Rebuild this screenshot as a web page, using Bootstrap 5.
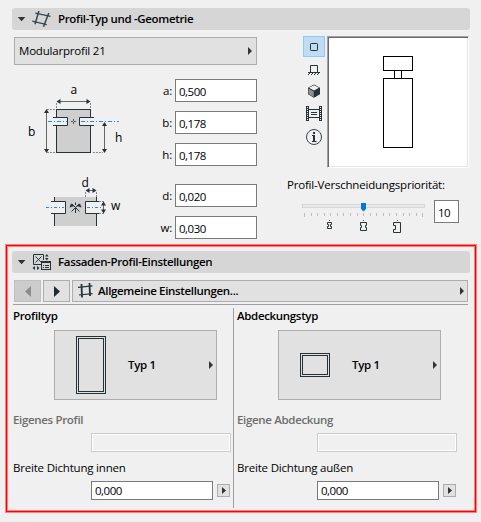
<!DOCTYPE html>
<html lang="de">
<head>
  <meta charset="UTF-8" />
  <meta name="viewport" content="width=device-width, initial-scale=1.0" />
  <title>Profil-Einstellungen</title>
  <link rel="stylesheet" href="https://cdn.jsdelivr.net/npm/bootstrap@5.3.0/dist/css/bootstrap.min.css" />
  <style>
    body {
      width: 481px;
      height: 522px;
      background: #f0f0f0;
      color: #000;
      font: 11.5px/16px "Open Sans", "Noto Sans", sans-serif;
      letter-spacing: -0.2px;
    }
    svg { display: block; flex: none; }
    svg text { font-size: 12px; fill: #000; }
    .panel-title {
      height: 22px;
      margin: 0 11px 0 12px;
      background: #d6d6d6;
      border-radius: 3px;
      font-weight: 600;
      letter-spacing: -0.33px;
    }
    .win-btn {
      background: #e1e1e1;
      border: 1px solid #adadad;
      border-radius: 0;
      padding: 0;
      color: #000;
      font-size: 11.5px;
      line-height: 16px;
      letter-spacing: inherit;
      display: flex;
      align-items: center;
    }
    .win-btn:disabled { background: #ccc; border-color: #bfbfbf; opacity: 1; }
    .heavy { font-weight: 600; letter-spacing: -0.33px; }
    .dim { color: #6d6d6d; }
    .win-field {
      height: 23px;
      padding: 1px 3px 0;
      border: 1px solid #7a7a7a;
      border-radius: 0;
      background: #fff;
      color: #000;
      font-size: 11.5px;
      line-height: 16px;
      letter-spacing: -0.5px;
    }
    .geometry { height: 215px; padding: 7px 0 0 14px; }
    .geo-left { width: 243px; }
    .profile-select { height: 28px; padding: 0 4px; }
    .values { width: 97px; padding-top: 14px; }
    .values label { width: 12px; margin-right: 3px; text-align: right; white-space: nowrap; direction: rtl; }
    .values .value-row { height: 23px; margin-bottom: 9px; }
    .values .gap-after { margin-bottom: 18px; }
    .values .win-field { width: 82px; }
    .geo-right { width: 182px; margin-left: 30px; margin-top: -1px; }
    .tools { width: 22px; margin-left: 16px; }
    .preview {
      width: 142px;
      height: 132px;
      margin-left: 2px;
      background: #fff;
      border: 1px solid;
      border-color: #a0a0a0 #fff #fff #a0a0a0;
      box-shadow: inset 1px 1px #696969, inset -1px -1px #e3e3e3;
    }
    .priority-label { margin-top: 10px; line-height: 14px; }
    .priority { width: 25px; margin-top: 8px; }
    .facade {
      width: 470px;
      height: 267px;
      margin-left: 6px;
      border: 1px solid #f00;
      box-shadow: 0 0 0 1px #ff8080, inset 0 0 0 1px #ff8080;
      padding-top: 5px;
    }
    .facade .panel-title { margin: 0 5px; }
    .nav-row { margin: 7px 0 2px 7px; gap: 2px; }
    .nav-row .win-btn { height: 22px; width: 27px; }
    .nav-row .settings-btn { width: 396px; padding: 0 3px 0 5px; }
    .split { margin: 0 7px 0 6px; border-top: 1px solid #a0a0a0; }
    .half-left { width: 221px; height: 200px; margin-top: 3px; border-right: 1px solid #a0a0a0; }
    .half-right { margin-top: 3px; padding-left: 3px; }
    .caption-line { height: 16px; }
    .type-btn { width: 163px; height: 70px; margin: 6px 0 12px 41px; padding: 0 3px 0 21px; }
    .type-name { margin-left: 22px; }
    .own-field {
      width: 140px;
      height: 19px;
      margin: 5px 0 8px 78px;
      background: #f0f0f0;
      border: 1px solid #ccc;
      box-shadow: inset 0 0 0 1px #fff;
      padding: 0;
      border-radius: 0;
    }
    .seal-row { margin: 5px 0 0 78px; gap: 4px; }
    .seal-row .win-field { width: 122px; height: 19px; padding-top: 0; }
    .seal-row .win-btn { width: 13px; height: 13px; padding-left: 4px; }
    .half-right .own-field, .half-right .seal-row { margin-left: 80px; }
  </style>
</head>
<body class="overflow-hidden d-flex flex-column">
  <!-- Profile type and geometry -->
  <div class="panel-title d-flex align-items-center flex-shrink-0 mt-2">
    <svg width="46" height="22" viewBox="12 8 46 22">
      <path d="M17.8 17h7.6l-3.8 4.2z" fill="#333" />
      <g fill="none" stroke="#37454d" stroke-width="1.5">
        <path d="M35.3 13.2L50.5 16.3M32.2 21.2L46.8 24.6" stroke-width="1.2" />
        <path d="M38.9 11L35 24.2M48.8 13L43.5 26.8" />
      </g>
    </svg>
    <span>Profil-Typ und -Geometrie</span>
  </div>

  <div class="geometry d-flex align-items-start flex-shrink-0">
    <div class="geo-left">
      <button class="btn win-btn profile-select w-100 justify-content-between">
        <span>Modularprofil 21</span>
        <svg width="4" height="8"><path d="M0 0L4 4L0 8z" fill="#333" /></svg>
      </button>
      <div class="d-flex">
        <svg width="146" height="176" viewBox="14 65 146 176">
          <g fill="none" stroke="#263238">
            <rect x="56.5" y="109.5" width="34" height="43" fill="#cfcfcf" />
            <path d="M53 117.500H67.500V125.500H53M94 117.500H79.500V125.500H94" fill="#f0f0f0" />
            <path d="M56.500 118V125M90.500 118V125" stroke="#f0f0f0" />
            <rect x="54" y="197" width="43" height="29" fill="#cfcfcf" stroke="none" />
            <path d="M54.500 197V226M96.500 197V226" />
            <path d="M51 201.500H65.500V213.500H51M100 201.500H85.500V213.500H100" fill="#f0f0f0" />
            <path d="M54.500 202V213M96.500 202V213" stroke="#f0f0f0" />
          </g>
          <g fill="none" stroke="#888" stroke-dasharray="2 1">
            <path d="M56.500 103V108M90.500 103V108M47 109.500H55M47 152.500H55M93 152.500H103" />
            <path d="M85.500 192V197M96.500 192V197M99 201.500H104M99 213.500H104" />
          </g>
          <g fill="none" stroke="#666">
            <path d="M60 101.500H88M46.500 112V150M104.500 125V150M88 190.500H94M103.500 205V211" />
            <path d="M73.500 119V121M73.500 122V124M71 121.500H73M74 121.500H76" stroke="#555" />
          </g>
          <g fill="#263238">
            <path d="M56.500 101.500l4-2.500v5zM90.500 101.500l-4-2.500v5z" />
            <path d="M46.500 109l-2.500 4h5zM46.500 153l-2.500-4h5zM104.500 122l-2.500 4h5zM104.500 153l-2.500-4h5z" />
            <path d="M85.500 190.500l4-2.500v5zM96.500 190.500l-4-2.500v5z" />
            <path d="M103.500 201.500l-2.500 4h5zM103.500 213.500l-2.500-4h5z" />
            <path d="M69.500 207.500l1.500-4 3.500 2.500zM81.500 207.500l-1.500-4-3.500 2.500z" />
          </g>
          <path d="M75.500 202.500V205M75.500 208V213M71.500 211.500L79 204M79.500 211.500L72 204" stroke="#263238" fill="none" />
          <g fill="none" stroke="#2a82ff">
            <path d="M48 121.500H67M81 121.500H119" stroke-dasharray="4 2 1 2" />
            <path d="M46 207.500H64M87 207.500H101" stroke-dasharray="3 2 1 2" />
          </g>
          <text x="70.500" y="94">a</text>
          <text x="28" y="136">b</text>
          <text x="115" y="142">h</text>
          <text x="81.500" y="187">d</text>
          <text x="111" y="210">w</text>
        </svg>
        <div class="values flex-shrink-0">
          <div class="value-row d-flex align-items-center"><label for="va"><bdi>a:</bdi></label><input id="va" class="win-field" value="0,500" /></div>
          <div class="value-row d-flex align-items-center"><label for="vb"><bdi>b:</bdi></label><input id="vb" class="win-field" value="0,178" /></div>
          <div class="value-row gap-after d-flex align-items-center"><label for="vh"><bdi>h:</bdi></label><input id="vh" class="win-field" value="0,178" /></div>
          <div class="value-row d-flex align-items-center"><label for="vd"><bdi>d:</bdi></label><input id="vd" class="win-field" value="0,020" /></div>
          <div class="value-row d-flex align-items-center"><label for="vw"><bdi>w:</bdi></label><input id="vw" class="win-field" value="0,030" /></div>
        </div>
      </div>
    </div>

    <div class="geo-right">
      <div class="d-flex">
        <!-- View mode icons -->
        <svg class="tools" width="22" height="112" viewBox="303 36 22 112">
          <rect x="303.500" y="36.500" width="21" height="20" fill="#c0dcf3" stroke="#90c8f6" />
          <g fill="none" stroke="#263238">
            <rect x="310.500" y="43.500" width="7" height="7" rx=".7" />
            <path d="M310.500 72V65.500H317.500V72M308 72.500H320" />
            <path d="M308 75l2-2M311 75l2-2M314 75l2-2M317 75l2-2" />
          </g>
          <path d="M314 84.500l6 3.200v6.600l-6 3.500-6-3.500v-6.600z" fill="#263238" />
          <path d="M314 85.200l5 2.600-5 2.800-5-2.800z" fill="#f0f0f0" />
          <path d="M308.500 88.500l5.200 2.900v5.700l-5.200-3z" fill="#8b9094" />
          <g fill="none" stroke="#263238">
            <path d="M307.500 106V121M320.500 106V121" stroke-width="3" />
            <path d="M307.500 107V121M320.500 107V121" stroke="#f0f0f0" stroke-dasharray="1 1" />
            <path d="M309 109.500H319M309 117.500H319M311 112.500H317M311 114.500H317" />
            <circle cx="314" cy="137" r="7.500" stroke="#37454d" />
            <path d="M312 135.500H314.500M312 141.500H316.500" />
          </g>
          <path d="M313 135h2v7h-2zM313 132h2v2h-2z" fill="#263238" />
        </svg>
        <div class="preview">
          <svg width="140" height="130" viewBox="328 37 140 130">
            <g fill="none" stroke="#000">
              <rect x="383.500" y="56.500" width="29" height="14" />
              <path d="M394.500 71V78M401.500 71V78" />
              <rect x="383.500" y="78.500" width="29" height="69" />
            </g>
          </svg>
        </div>
      </div>
      <div class="priority-label text-nowrap">Profil-Verschneidungspriorität:</div>
      <div class="d-flex">
        <svg width="147" height="42" viewBox="287 192 147 42">
          <rect x="302.500" y="204.500" width="122" height="3" fill="#e7eaea" stroke="#d6d6d6" />
          <g id="ticks" stroke="#bcbcbc"></g>
          <path d="M361 203h5v6l-2.500 2.500-2.500-2.500z" fill="#0078d7" />
          <g fill="none" stroke="#263238">
            <path d="M327.500 222.500H331.500V224.500H330.500V226.500H331.500V228.500H327.500V226.500H328.500V224.500H327.500z" />
            <path d="M360.500 222.500H366.500V225.500H365.500V227.500H366.500V230.500H360.500V227.500H361.500V225.500H360.500z" />
            <path d="M393.500 222.500H400.500V232.500H393.500V229.500H395.500V225.500H393.500z" />
            <path d="M329 220.500h1M363 220.500h1M397 220.500h1" stroke="#555" />
          </g>
        </svg>
        <input class="win-field priority" value="10" aria-label="Priorität" size="1" />
      </div>
    </div>
  </div>

  <!-- Facade profile settings -->
  <div class="facade flex-shrink-0">
    <div class="panel-title d-flex align-items-center">
      <svg width="46" height="22" viewBox="12 251 46 22">
        <path d="M17.800 260h7.600l-3.800 4.200z" fill="#333" />
        <g fill="none" stroke="#263238">
          <path d="M41 264.500H33.500V254.500H43.500V260M35.500 256.500l6 6M41.500 256.500l-6 6" />
          <rect x="41.500" y="261.500" width="9" height="8" />
          <path d="M41 262.500H51M43 265.500h1M45 265.500h4M43 267.500h1M45 267.500h4" />
        </g>
        <path d="M45 256.500h3.500l-1.700-2.500zM45 258h3.500l-1.700 2.500zM35 266v4l-2.500-2zM37 266v4l2.500-2z" fill="#263238" />
      </svg>
      <span>Fassaden-Profil-Einstellungen</span>
    </div>
    <div class="nav-row d-flex">
      <button class="btn win-btn justify-content-center" disabled aria-label="Zurück">
        <svg width="6" height="11"><path d="M6 0v11L0 5.500z" fill="#8c8c8c" /></svg>
      </button>
      <button class="btn win-btn justify-content-center" aria-label="Weiter">
        <svg width="6" height="11"><path d="M0 0v11l6-5.500z" fill="#222b30" /></svg>
      </button>
      <button class="btn win-btn settings-btn heavy">
        <svg width="20" height="18" viewBox="78 282 20 18">
          <path d="M81.500 284l.5 13.500M89.500 283l.5 13" stroke="#263238" stroke-width="1.800" />
          <path d="M78 287.300l14.500-1.500M79 295l13.500-1.400" stroke="#263238" stroke-width="1.200" />
        </svg>
        <span class="me-auto">Allgemeine Einstellungen...</span>
        <svg width="4" height="8"><path d="M0 0L4 4L0 8z" fill="#333" /></svg>
      </button>
    </div>

    <div class="split d-flex">
      <div class="half-left">
        <div class="caption-line heavy">Profiltyp</div>
        <button class="btn win-btn type-btn heavy">
          <svg width="30" height="58">
            <g fill="none" stroke="#263238"><rect x=".5" y=".5" width="29" height="57" /><rect x="2.500" y="2.500" width="25" height="53" /></g>
          </svg>
          <span class="type-name me-auto">Typ 1</span>
          <svg width="4" height="8"><path d="M0 0L4 4L0 8z" fill="#333" /></svg>
        </button>
        <div class="caption-line heavy dim">Eigenes Profil</div>
        <input class="own-field d-block" disabled aria-label="Eigenes Profil" />
        <div class="caption-line">Breite Dichtung innen</div>
        <div class="seal-row d-flex align-items-center">
          <input class="win-field" value="0,000" aria-label="Breite Dichtung innen" />
          <button class="btn win-btn" aria-label="Mehr"><svg width="4" height="7"><path d="M0 0l4 3.500L0 7z" fill="#333" /></svg></button>
        </div>
      </div>
      <div class="half-right">
        <div class="caption-line heavy">Abdeckungstyp</div>
        <button class="btn win-btn type-btn heavy">
          <svg width="30" height="24">
            <g fill="none" stroke="#263238"><rect x=".5" y=".5" width="29" height="23" /><rect x="2.500" y="2.500" width="25" height="19" /></g>
          </svg>
          <span class="type-name me-auto">Typ 1</span>
          <svg width="4" height="8"><path d="M0 0L4 4L0 8z" fill="#333" /></svg>
        </button>
        <div class="caption-line heavy dim">Eigene Abdeckung</div>
        <input class="own-field d-block" disabled aria-label="Eigene Abdeckung" />
        <div class="caption-line">Breite Dichtung außen</div>
        <div class="seal-row d-flex align-items-center">
          <input class="win-field" value="0,000" aria-label="Breite Dichtung außen" />
          <button class="btn win-btn" aria-label="Mehr"><svg width="4" height="7"><path d="M0 0l4 3.500L0 7z" fill="#333" /></svg></button>
        </div>
      </div>
    </div>
  </div>

  <script src="https://cdn.jsdelivr.net/npm/bootstrap@5.3.0/dist/js/bootstrap.bundle.min.js"></script>
  <script>
    // Slider scale: 19 evenly spaced ticks, longer ones at both ends
    let marks = "";
    for (let i = 0; i < 19; i++) {
      const x = Math.round(304 + i * 6.57) + 0.5;
      const end = i === 0 || i === 18 ? 217 : 216;
      marks += `<path d="M${x} 213V${end}" />`;
    }
    document.getElementById("ticks").innerHTML = marks;
  </script>
</body>
</html>
